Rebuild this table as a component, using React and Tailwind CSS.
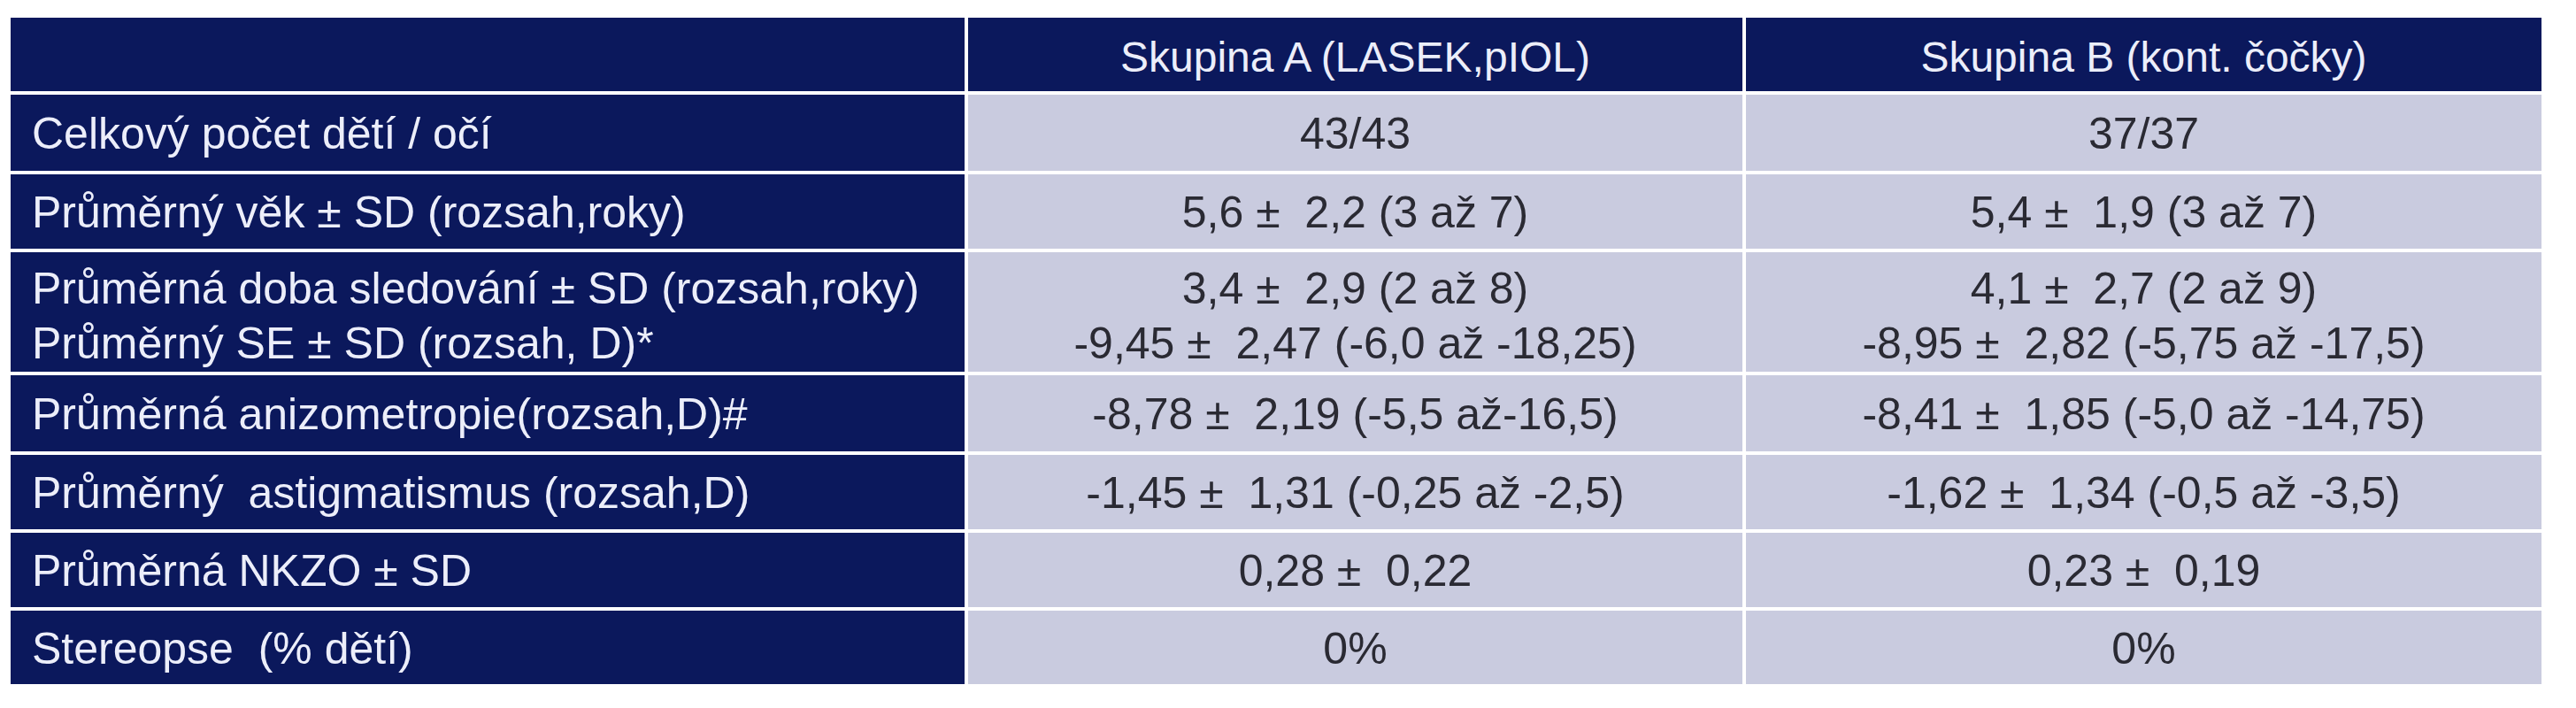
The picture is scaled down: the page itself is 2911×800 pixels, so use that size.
const rows = [
  {
    label: ["Celkový počet dětí / očí"],
    a: ["43/43"],
    b: ["37/37"],
  },
  {
    label: ["Průměrný věk ± SD (rozsah,roky)"],
    a: ["5,6 ±  2,2 (3 až 7)"],
    b: ["5,4 ±  1,9 (3 až 7)"],
  },
  {
    label: ["Průměrná doba sledování ± SD (rozsah,roky)", "Průměrný SE ± SD (rozsah, D)*"],
    a: ["3,4 ±  2,9 (2 až 8)", "-9,45 ±  2,47 (-6,0 až -18,25)"],
    b: ["4,1 ±  2,7 (2 až 9)", "-8,95 ±  2,82 (-5,75 až -17,5)"],
    tall: true,
  },
  {
    label: ["Průměrná anizometropie(rozsah,D)#"],
    a: ["-8,78 ±  2,19 (-5,5 až-16,5)"],
    b: ["-8,41 ±  1,85 (-5,0 až -14,75)"],
  },
  {
    label: ["Průměrný  astigmatismus (rozsah,D)"],
    a: ["-1,45 ±  1,31 (-0,25 až -2,5)"],
    b: ["-1,62 ±  1,34 (-0,5 až -3,5)"],
  },
  {
    label: ["Průměrná NKZO ± SD"],
    a: ["0,28 ±  0,22"],
    b: ["0,23 ±  0,19"],
  },
  {
    label: ["Stereopse  (% dětí)"],
    a: ["0%"],
    b: ["0%"],
  },
];

function Cell({ lines, tall, dark, center }) {
  const base = dark
    ? "bg-[#0b185c] text-[#eceefa]"
    : "bg-[#c9cbdf] text-[#2a2a33]";
  const align = center ? "items-center text-center" : "items-start pl-[24px]";
  if (tall) {
    return (
      <div className={`${base} ${align} flex flex-col pt-[10px] leading-[62px]`}>
        {lines.map((l, i) => (
          <span key={i} className="whitespace-pre">{l}</span>
        ))}
      </div>
    );
  }
  return (
    <div className={`${base} ${align} flex flex-col justify-center pt-[2px] leading-none`}>
      <span className="whitespace-pre">{lines[0]}</span>
    </div>
  );
}

export default function App() {
  return (
    <div className="min-h-screen w-[2911px] bg-white pl-[12px] pt-[20px] font-['Liberation_Sans',Arial,sans-serif] text-[50px]">
      <div className="grid grid-cols-[1078px_875px_899px] grid-rows-[83px_86px_84px_135px_86px_84px_84px_83px] gap-[4px]">
        {/* Header */}
        <div className="bg-[#0b185c]"></div>
        <div className="flex items-center justify-center bg-[#0b185c] pt-[6px] text-[48px] leading-none text-[#eceefa]">
          Skupina A (LASEK,pIOL)
        </div>
        <div className="flex items-center justify-center bg-[#0b185c] pt-[6px] text-[48px] leading-none text-[#eceefa]">
          Skupina B (kont. čočky)
        </div>

        {rows.map((r, i) => (
          <div key={i} className="contents">
            <Cell lines={r.label} tall={r.tall} dark />
            <Cell lines={r.a} tall={r.tall} center />
            <Cell lines={r.b} tall={r.tall} center />
          </div>
        ))}
      </div>
    </div>
  );
}
